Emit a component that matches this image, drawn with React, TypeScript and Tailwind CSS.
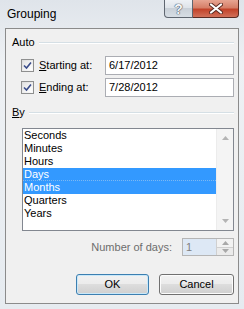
import React from "react";

const font = { fontFamily: '"Liberation Sans", Arial, sans-serif' };

function Check() {
  return (
    <div className="w-[13px] h-[13px] border border-[#8e8f8f] bg-gradient-to-br from-[#dcdcdc] to-[#fbfbfb] p-[1px] shrink-0">
      <div className="w-full h-full bg-gradient-to-br from-[#e4e4e4] to-white flex items-center justify-center">
        <svg width="9" height="9" viewBox="0 0 9 9">
          <path d="M1 4.5 L3.5 7 L8 1.5" fill="none" stroke="#3a4c8a" strokeWidth="1.6" />
        </svg>
      </div>
    </div>
  );
}

function Btn({ label, primary }: { label: string; primary?: boolean }) {
  return (
    <div
      className={
        "h-[21px] rounded-[3px] border flex items-center justify-center text-[11px] text-black bg-[linear-gradient(#f2f2f2_0%,#ebebeb_50%,#dddddd_50%,#cfcfcf_100%)] " +
        (primary
          ? "w-[73px] border-[#3c7fb1] shadow-[inset_0_0_0_1px_#c9e8f9]"
          : "w-[75px] border-[#707070] shadow-[inset_0_0_0_1px_#fcfcfc]")
      }
    >
      {label}
    </div>
  );
}

const items = ["Seconds", "Minutes", "Hours", "Days", "Months", "Quarters", "Years"];

export default function App() {
  return (
    <div
      className="w-[244px] h-[309px] flex flex-col bg-[linear-gradient(180deg,#dfe4ea_0%,#eef1f4_20%,#e6ebf0_100%)] overflow-hidden"
      style={font}
    >
      {/* title bar */}
      <div className="h-[28px] flex items-start shrink-0">
        <div className="pl-[7px] pt-[7px] text-[12px] leading-[14px] text-black">Grouping</div>
        <div className="ml-auto mr-[5px] flex">
          <div className="w-[29px] h-[18px] border border-t-0 border-[#5f6670] rounded-bl-[4px] bg-[linear-gradient(#eef1f5_0%,#dde2e8_50%,#c9d0d8_50%,#d7dde4_100%)] flex items-center justify-center text-[14px] leading-none text-[#f4f6f8] font-bold [text-shadow:0_0_1px_#4a5260,0_0_1px_#4a5260,0_0_1px_#4a5260]">
            ?
          </div>
          <div className="w-[46px] h-[18px] border border-t-0 border-l-0 border-[#5a2a22] rounded-br-[4px] bg-[linear-gradient(#e7a592_0%,#d67f68_45%,#c2432a_55%,#d1705a_100%)] flex items-center justify-center">
            <svg width="14" height="11" viewBox="0 0 14 11">
              <path d="M2 1.5 L12 9.5 M12 1.5 L2 9.5" stroke="#5a2a22" strokeWidth="4" strokeLinecap="round" />
              <path d="M2 1.5 L12 9.5 M12 1.5 L2 9.5" stroke="#ffffff" strokeWidth="2.2" strokeLinecap="round" />
            </svg>
          </div>
        </div>
      </div>

      {/* client */}
      <div className="mx-[5px] w-[234px] h-[276px] border border-[#8b8b8b] bg-[#f0f0f0] flex flex-col pt-[6px] pl-[6px] pr-[4px] pb-[8px] text-[11px] text-black">
        <div className="h-[15px] flex items-center gap-[4px] leading-[15px]">
          <span>Auto</span>
          <div className="flex-1 h-[2px] border-t border-[#d5dfe5] border-b border-b-white" />
        </div>

        <div className="mt-[6px] h-[19px] flex items-center">
          <div className="w-[93px] pl-[9px] flex items-center gap-[5px]">
            <Check />
            <span>
              <span className="underline">S</span>tarting at:
            </span>
          </div>
          <div className="flex-1 h-[19px] border border-[#abadb3] bg-white pl-[3px] flex items-center">6/17/2012</div>
        </div>
        <div className="mt-[3px] h-[19px] flex items-center">
          <div className="w-[93px] pl-[9px] flex items-center gap-[5px]">
            <Check />
            <span>
              <span className="underline">E</span>nding at:
            </span>
          </div>
          <div className="flex-1 h-[19px] border border-[#abadb3] bg-white pl-[3px] flex items-center">7/28/2012</div>
        </div>

        <div className="mt-[8px] h-[15px] flex items-center gap-[4px] leading-[15px]">
          <span>
            <span className="underline">B</span>y
          </span>
          <div className="flex-1 h-[2px] border-t border-[#d5dfe5] border-b border-b-white" />
        </div>

        <div className="mt-[8px] ml-[10px] h-[103px] border border-[#828790] bg-white flex">
          <div className="flex-1 flex flex-col">
            {items.map((it) => {
              const sel = it === "Days" || it === "Months";
              return (
                <div
                  key={it}
                  className={
                    "h-[13px] leading-[13px] pl-[1px] " +
                    (sel ? "bg-[#3399ff] text-white " : "") +
                    (it === "Days" ? "border-b border-dotted border-[#7db8f2]" : "")
                  }
                >
                  {it}
                </div>
              );
            })}
          </div>
          <div className="w-[17px] bg-[#f4f4f4] border-l border-[#ececec] flex flex-col items-center justify-between py-[7px]">
            <svg width="7" height="4" viewBox="0 0 7 4">
              <path d="M0 4 L3.5 0 L7 4 Z" fill="#b4b4b4" />
            </svg>
            <svg width="7" height="4" viewBox="0 0 7 4">
              <path d="M0 0 L3.5 4 L7 0 Z" fill="#b4b4b4" />
            </svg>
          </div>
        </div>

        <div className="mt-[7px] h-[18px] flex items-center justify-end">
          <span className="text-[#6d6d6d] mr-[10px]">Number of days:</span>
          <div className="w-[52px] h-[18px] border border-[#b5b5b5] bg-[#dde8f5] flex">
            <div className="flex-1 pl-[3px] text-[#808080] leading-[16px]">1</div>
            <div className="w-[17px] flex flex-col border-l border-[#d0d0d0]">
              <div className="flex-1 bg-[#f2f2f2] border-b border-[#d0d0d0] flex items-center justify-center">
                <svg width="7" height="4" viewBox="0 0 7 4">
                  <path d="M0 4 L3.5 0 L7 4 Z" fill="#a8a8a8" />
                </svg>
              </div>
              <div className="flex-1 bg-[#ebebeb] flex items-center justify-center">
                <svg width="7" height="4" viewBox="0 0 7 4">
                  <path d="M0 0 L3.5 4 L7 0 Z" fill="#a8a8a8" />
                </svg>
              </div>
            </div>
          </div>
        </div>

        <div className="mt-[18px] flex justify-end gap-[10px]">
          <Btn label="OK" primary />
          <Btn label="Cancel" />
        </div>
      </div>
    </div>
  );
}
